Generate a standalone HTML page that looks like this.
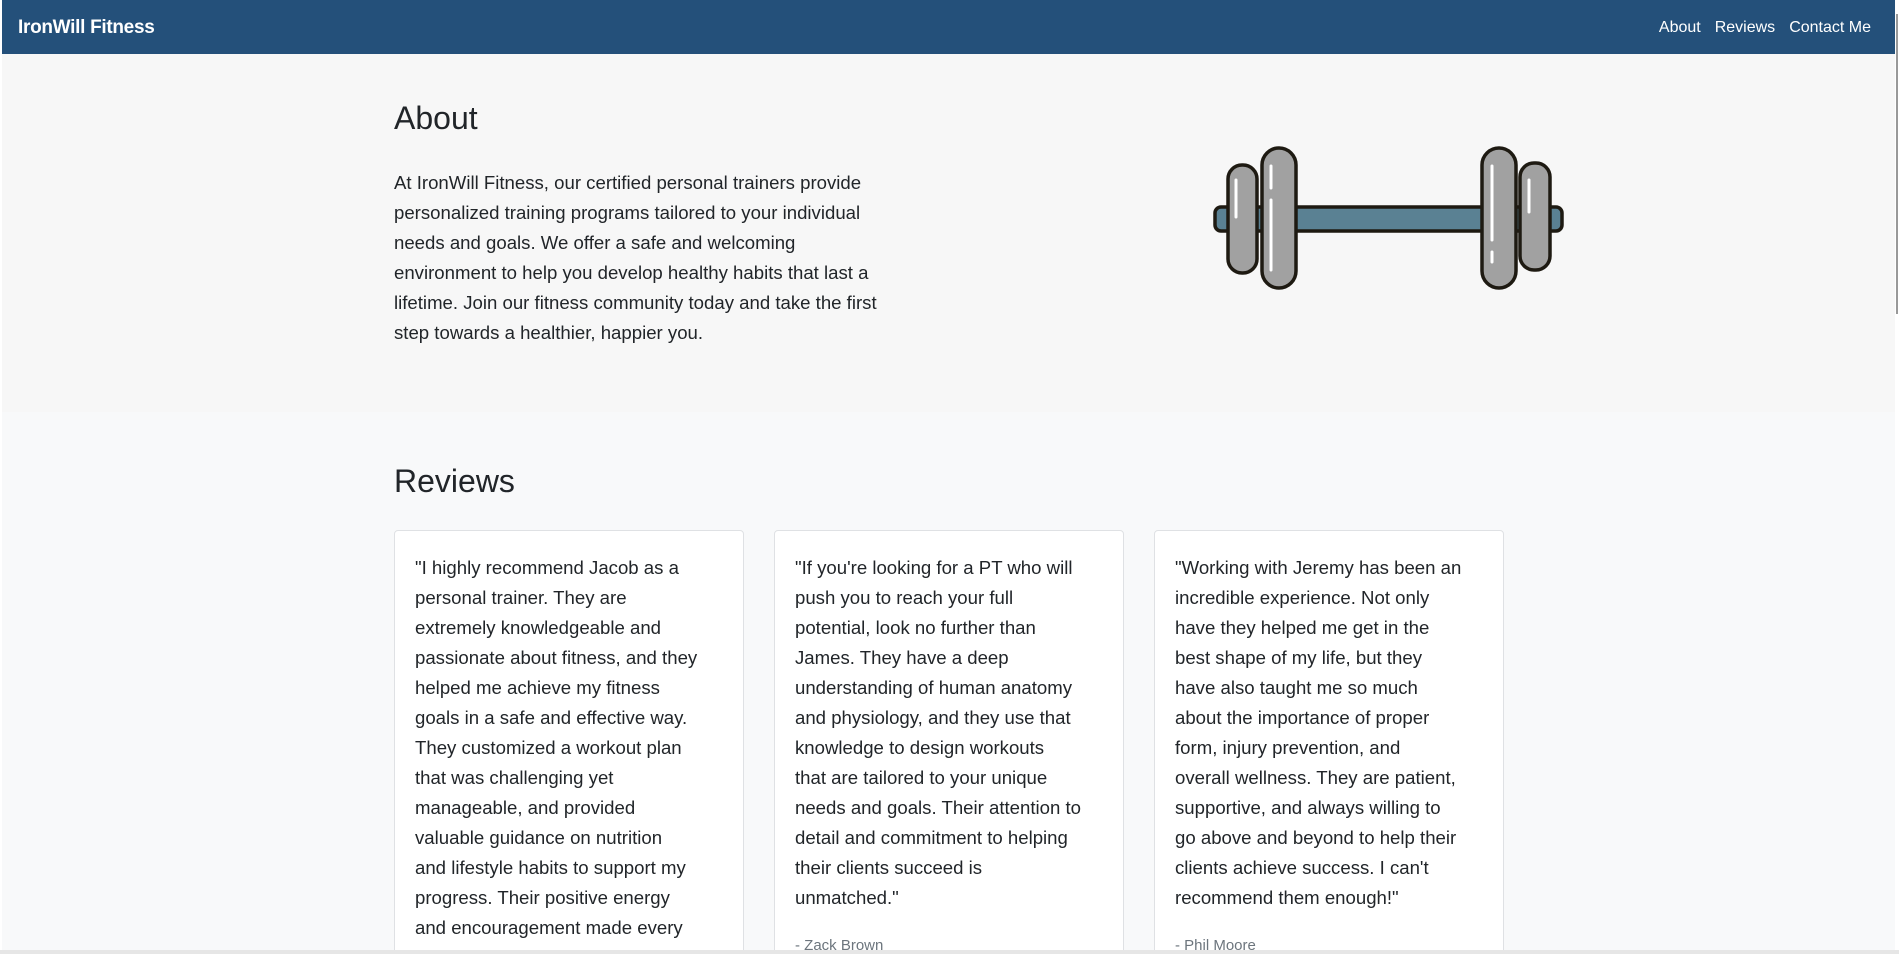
<!DOCTYPE html>
<html><head><meta charset="utf-8"><style>
*{margin:0;padding:0;box-sizing:border-box}
html,body{width:1899px;height:954px;overflow:hidden}
body{background:#fff;font-family:"Liberation Sans",sans-serif;color:#212529;position:relative}
.nav{position:absolute;left:2px;top:0;width:1893px;height:54px;background:#24507a}
.brand{position:absolute;left:16px;top:17px;color:#fff;font-weight:bold;font-size:19px;letter-spacing:-0.3px}
.links{position:absolute;right:24px;top:19px;color:#fff;font-size:16px}
.links span{margin-left:14px}
.about{position:absolute;left:2px;top:54px;width:1893px;height:358px;background:#f7f7f7}
.reviews{position:absolute;left:2px;top:412px;width:1893px;height:538px;background:#f8f9fa}
h2{position:absolute;left:394px;font-weight:500;font-size:32px;line-height:38px;color:#212529}
.p{position:absolute;left:394px;top:168px;font-size:18.6px;line-height:30px;white-space:nowrap;color:#212529}
.card{position:absolute;top:530px;width:350px;height:430px;background:#fff;border:1px solid #dfe1e4;border-radius:4px}
.card .t{position:absolute;left:20px;top:22px;font-size:18.6px;line-height:30px;white-space:nowrap}
.card .a{position:absolute;left:20px;top:406px;font-size:15px;color:#6c757d}
.sb{position:absolute;right:0;top:0;width:4px;height:954px;background:#fff}
.sb i{position:absolute;left:1px;top:14px;width:2px;height:300px;background:#999}
.bb{position:absolute;left:0;top:950px;width:1899px;height:4px;background:#e6e6e6;z-index:5}
</style></head><body>
<div class="nav"><div class="brand">IronWill Fitness</div><div class="links"><span>About</span><span>Reviews</span><span>Contact Me</span></div></div>
<div class="about"></div>
<div class="reviews"></div>
<h2 style="top:99px">About</h2>
<div class="p">At IronWill Fitness, our certified personal trainers provide<br>personalized training programs tailored to your individual<br>needs and goals. We offer a safe and welcoming<br>environment to help you develop healthy habits that last a<br>lifetime. Join our fitness community today and take the first<br>step towards a healthier, happier you.</div>
<svg style="position:absolute;left:1200px;top:140px" width="380" height="160" viewBox="1200 140 380 160">
<g stroke="#1e1a12" stroke-width="3.5">
<rect x="1215" y="207" width="347" height="24" rx="6" fill="#5a8193"/>
<rect x="1228" y="165" width="29" height="108" rx="14" fill="#a1a1a1"/>
<rect x="1262" y="148" width="34" height="140" rx="17" fill="#a1a1a1"/>
<rect x="1482" y="148" width="34" height="140" rx="17" fill="#a1a1a1"/>
<rect x="1520" y="163" width="30" height="107" rx="14" fill="#a1a1a1"/>
</g>
<g stroke="#fff" stroke-width="3" stroke-linecap="round">
<line x1="1236" y1="180" x2="1236" y2="217"/>
<line x1="1271" y1="166" x2="1271" y2="188"/>
<line x1="1271" y1="200" x2="1271" y2="270"/>
<line x1="1492" y1="166" x2="1492" y2="240"/>
<line x1="1492" y1="252" x2="1492" y2="262"/>
<line x1="1529" y1="180" x2="1529" y2="212"/>
</g>
</svg>
<h2 style="top:462px">Reviews</h2>
<div class="card" style="left:394px"><div class="t">"I highly recommend Jacob as a<br>personal trainer. They are<br>extremely knowledgeable and<br>passionate about fitness, and they<br>helped me achieve my fitness<br>goals in a safe and effective way.<br>They customized a workout plan<br>that was challenging yet<br>manageable, and provided<br>valuable guidance on nutrition<br>and lifestyle habits to support my<br>progress. Their positive energy<br>and encouragement made every<br>session enjoyable!"</div></div>
<div class="card" style="left:774px"><div class="t">"If you're looking for a PT who will<br>push you to reach your full<br>potential, look no further than<br>James. They have a deep<br>understanding of human anatomy<br>and physiology, and they use that<br>knowledge to design workouts<br>that are tailored to your unique<br>needs and goals. Their attention to<br>detail and commitment to helping<br>their clients succeed is<br>unmatched."</div><div class="a">- Zack Brown</div></div>
<div class="card" style="left:1154px"><div class="t">"Working with Jeremy has been an<br>incredible experience. Not only<br>have they helped me get in the<br>best shape of my life, but they<br>have also taught me so much<br>about the importance of proper<br>form, injury prevention, and<br>overall wellness. They are patient,<br>supportive, and always willing to<br>go above and beyond to help their<br>clients achieve success. I can't<br>recommend them enough!"</div><div class="a">- Phil Moore</div></div>
<div class="sb"><i></i></div>
<div class="bb"></div>
</body></html>
